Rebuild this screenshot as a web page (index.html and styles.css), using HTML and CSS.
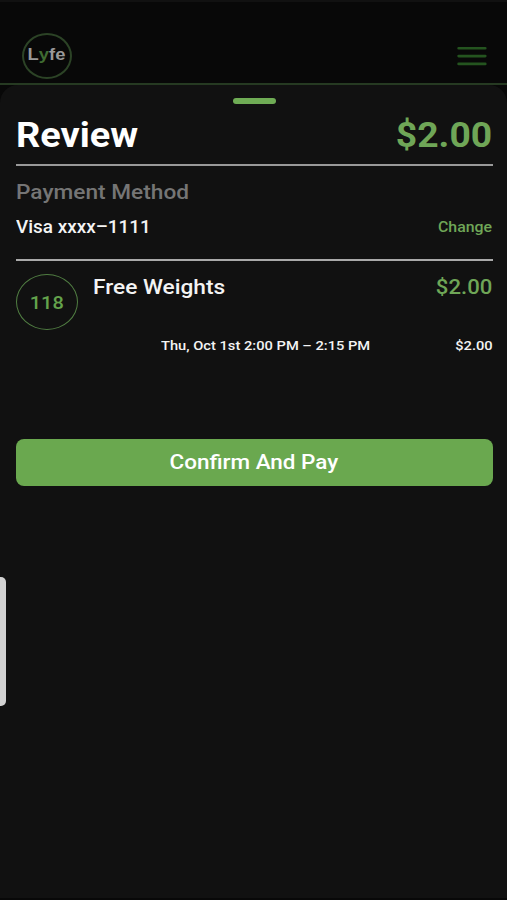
FILE: index.html
```html
<!DOCTYPE html>
<html lang="en">
<head>
<meta charset="utf-8">
<meta name="viewport" content="width=device-width, initial-scale=1">
<title>Review</title>
<link rel="stylesheet" href="styles.css">
</head>
<body>
<header class="topbar">
  <div class="logo"><span class="wide">L<b>y</b>fe</span></div>
  <svg class="menu" viewBox="0 0 30 20" aria-label="Menu"><path d="M1.6 2.3H28.3M1.6 10.1H28.3M1.6 17.9H28.3"/></svg>
</header>
<main class="sheet">
  <div class="handle"></div>
  <div class="row title">
    <h1 class="wide">Review</h1>
    <span class="wide end total">$2.00</span>
  </div>
  <section class="payment">
    <h2 class="wide">Payment Method</h2>
    <div class="row">
      <span class="wide card">Visa xxxx–1111</span>
      <a class="wide end change">Change</a>
    </div>
  </section>
  <section class="item">
    <div class="badge"><span class="wide">118</span></div>
    <div class="details">
      <div class="row name"><span class="wide">Free Weights</span><span class="wide end price">$2.00</span></div>
      <div class="row slot"><span class="wide time">Thu, Oct 1st 2:00 PM – 2:15 PM</span><span class="wide end">$2.00</span></div>
    </div>
  </section>
  <button class="pay"><span class="wide">Confirm And Pay</span></button>
</main>
<div class="edge"></div>
</body>
</html>
```
FILE: styles.css
```css
* { box-sizing: border-box; }
body {
  margin: 0;
  height: 900px;
  overflow: hidden;
  display: flex;
  flex-direction: column;
  background: #080808;
  color: #f4f4f4;
  font-family: Roboto, sans-serif;
  font-weight: 500;
}
h1, h2 { margin: 0; }
.wide {
  display: inline-block;
  white-space: nowrap;
  transform: scaleX(1.08);
  transform-origin: left center;
}
.end { transform-origin: right center; }
.row { display: flex; justify-content: space-between; align-items: center; }

.topbar {
  height: 85px;
  flex: none;
  display: flex;
  justify-content: space-between;
  align-items: flex-start;
  padding: 31px 20px 0 22px;
  border-top: 2px solid #111;
  border-bottom: 2px solid #263a22;
}
.logo {
  width: 50px;
  height: 46px;
  border: 2px solid #2c4326;
  border-radius: 50%;
  display: flex;
  justify-content: center;
  padding-top: 10px;
  color: #999;
  font: bold 17px/20px "Liberation Sans", sans-serif;
}
.logo .wide { transform-origin: center; transform: translateX(-1px) scaleX(1.08); }
.logo b { color: #3f6b31; }
.menu { width: 30px; height: 20px; margin-top: 13px; }
.menu path { stroke: #24541f; stroke-width: 2.6; stroke-linecap: round; }

.sheet {
  flex: 1;
  padding: 12px 14.5px 0 15.5px;
  background: #111;
  border-radius: 18px 18px 0 0;
  border-bottom: 2px solid #080808;
}
.handle { width: 43px; height: 6px; margin: 1px auto 0; border-radius: 3px; background: #6fac55; }
.title { height: 62px; border-bottom: 2px solid #999; color: #fff; font-weight: 700; }
.title h1, .total { font-size: 34.5px; line-height: 40px; padding-top: 1px; }
.title h1 { transform: scaleX(1.1); }
.total, .change, .price { color: #6fa657; }
.payment { height: 95px; padding-top: 13px; border-bottom: 2px solid #aaa; }
.payment h2 { display: block; width: fit-content; color: #757575; font-size: 21px; font-weight: 500; line-height: 26px; }
.payment .row { height: 44px; }
.card { font-size: 17.5px; }
.change { font-size: 14.7px; }
.item { display: flex; gap: 15px; height: 177.5px; padding-top: 13px; }
.badge {
  width: 62px;
  height: 56px;
  flex: none;
  border: 1.5px solid #507d42;
  border-radius: 50%;
  display: flex;
  align-items: center;
  justify-content: center;
  color: #64a34c;
  font-size: 18.5px;
  padding-top: 1px;
}
.badge .wide, .pay .wide { transform-origin: center; }
.details { flex: 1; }
.name { height: 25px; font-size: 21px; }
.name .price { font-size: 20.5px; }
.slot { height: 20px; margin-top: 36px; padding-left: 68px; font-size: 13.6px; }
.pay {
  display: block;
  width: 100%;
  height: 47px;
  border: 0;
  border-radius: 8px;
  background: #6aa84f;
  color: #fff;
  font: 500 21px/46px Roboto, sans-serif;
  padding: 0;
}
.pay .wide { transform: scaleX(1.07); }
.edge {
  position: absolute;
  left: 0;
  top: 577px;
  width: 6px;
  height: 129px;
  border-radius: 0 5px 5px 0;
  background: #d2d2d2;
}
```
